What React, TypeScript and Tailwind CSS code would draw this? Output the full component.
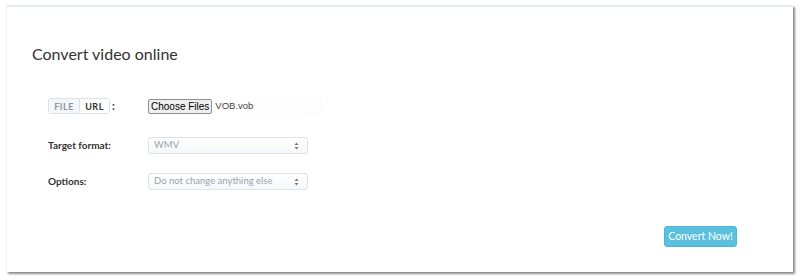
export default function App() {
  return (
    <div className="w-[800px] h-[280px] bg-white pt-[5px] pl-[6px]" style={{ fontFamily: 'Lato, "Open Sans", sans-serif' }}>
      <div className="w-[787px] h-[267px] bg-white border-t-2 border-t-[#e6ecf2] border-l border-l-[#eef1f4] shadow-[2px_2px_2px_rgba(0,0,0,0.45)] flex flex-col">
        <h1 className="ml-[25px] mt-[35px] text-[16px] leading-[24px] text-[#333]">Convert video online</h1>

        <div className="ml-[41px] mt-[32px] flex flex-col">
          {/* source row */}
          <div className="flex items-center h-[16px]">
            <div className="w-[100px] flex items-center">
              <div className="flex h-[16px] border border-[#dbe3ea] rounded-[3px] text-[9px] font-bold leading-none tracking-[0.5px]">
                <span className="w-[30px] flex items-center justify-center bg-[#f4f6f8] text-[#8a95a3]">FILE</span>
                <span className="w-[30px] flex items-center justify-center bg-white text-[#333] border-l border-[#dbe3ea]">URL</span>
              </div>
              <span className="ml-[2px] text-[11px] font-bold text-[#333]">:</span>
            </div>
            <div className="flex items-center w-[175px] h-[18px] bg-gradient-to-r from-white to-[#fdfdfd]" style={{ fontFamily: '"Liberation Sans", Arial, sans-serif' }}>
              <span className="h-[15px] px-[2px] flex items-center bg-[#efefef] border border-[#8f8f8f] rounded-[2px] text-[10px] text-black">Choose Files</span>
              <span className="ml-[3px] text-[9.5px] text-[#444]">VOB.vob</span>
            </div>
          </div>

          {/* target format */}
          <div className="flex items-center mt-[23px]">
            <span className="w-[100px] text-[10px] font-bold text-[#333]">Target format:</span>
            <div className="w-[160px] h-[17px] border border-[#dde3e8] rounded-[3px] bg-gradient-to-b from-white to-[#f6f7f8] flex items-center justify-between pl-[5px] pr-[8px]">
              <span className="text-[9.5px] text-[#9aa3ad]">WMV</span>
              <Arrows />
            </div>
          </div>

          {/* options */}
          <div className="flex items-center mt-[19px]">
            <span className="w-[100px] text-[10px] font-bold text-[#333]">Options:</span>
            <div className="w-[160px] h-[17px] border border-[#dde3e8] rounded-[3px] bg-gradient-to-b from-white to-[#f6f7f8] flex items-center justify-between pl-[5px] pr-[8px]">
              <span className="text-[9.5px] text-[#9aa3ad]">Do not change anything else</span>
              <Arrows />
            </div>
          </div>
        </div>

        <div className="flex justify-end mt-[36px] mr-[56px]">
          <button className="w-[73px] h-[21px] rounded-[3px] bg-[#5bc0de] border border-[#4fb5d5] text-white text-[10.5px] leading-none">
            Convert Now!
          </button>
        </div>
      </div>
    </div>
  );
}

function Arrows() {
  return (
    <svg width="5" height="8" viewBox="0 0 5 8" className="text-[#777]">
      <path d="M2.5 0.5 L4.5 3 H0.5 Z" fill="currentColor" />
      <path d="M2.5 7.5 L4.5 5 H0.5 Z" fill="currentColor" />
    </svg>
  );
}
